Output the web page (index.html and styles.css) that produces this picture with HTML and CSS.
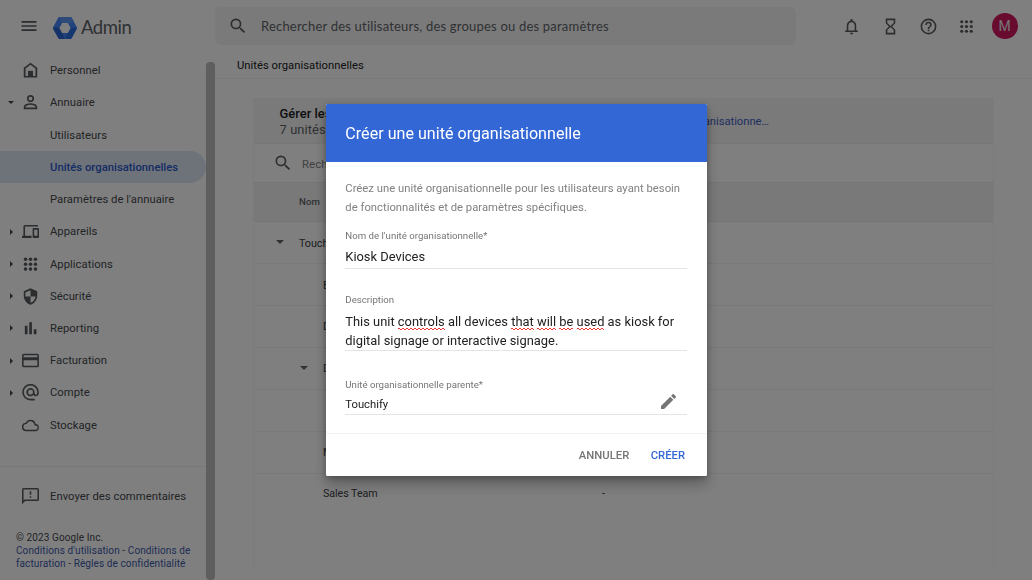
FILE: index.html
```html
<!DOCTYPE html>
<html lang="fr">
<head>
<meta charset="utf-8">
<title>Admin - Unités organisationnelles</title>
<link rel="stylesheet" href="styles.css">
</head>
<body>
<div class="app">
  <header class="topbar">
    <svg class="menu-icon" viewBox="0 0 24 24"><path d="M3 18h18v-2H3v2zm0-5h18v-2H3v2zm0-7v2h18V6H3z"/></svg>
    <svg class="logo" viewBox="0 0 24 22">
      <path fill="#4285f4" d="M6.800 0h10.400q1 0 1.500.8l4.900 8.900q.6 1.200 0 2.400l-4.900 8.900q-.5 1-1.500 1H6.800q-1 0-1.500-1L.4 12.200q-.6-1.200 0-2.400L5.300.8Q5.800 0 6.800 0z"/>
      <path fill="#2a66d0" d="M.2 10L7.500 11l4 11H6.800q-1 0-1.500-1L.4 12.200Q0 11 .2 10z"/>
      <path fill="#5c94f2" d="M6.800 0h10.400q1 0 1.500.8L21 5l-5 2-8-1z"/>
      <path fill="#2b6cdc" d="M23.800 10.500L17 11l-5 11h5.200q1 0 1.500-1l4.900-8.900q.4-.8.200-1.600z"/>
      <path fill="#fff" d="M9.200 6.100h5.600l2.800 4.900-2.800 4.900H9.200L6.400 11z"/>
    </svg>
    <span class="brand">Admin</span>
    <div class="search">
      <svg viewBox="0 0 24 24"><path d="M15.500 14h-.79l-.28-.27A6.470 6.470 0 0 0 16 9.500 6.500 6.500 0 1 0 9.500 16c1.610 0 3.090-.59 4.230-1.570l.27.28v.79l5 4.990L20.490 19l-4.990-5zm-6 0a4.500 4.500 0 1 1 0-9 4.500 4.500 0 0 1 0 9z"/></svg>
      <span>Rechercher des utilisateurs, des groupes ou des paramètres</span>
    </div>
    <div class="tools">
      <svg viewBox="0 0 24 24"><path d="M18 17v-6c0-3.070-1.630-5.640-4.500-6.320V4a1.500 1.500 0 0 0-3 0v.68C7.640 5.360 6 7.920 6 11v6H4v2h16v-2h-2zm-2 0H8v-6c0-2.480 1.510-4.500 4-4.500s4 2.020 4 4.500v6zm-4 5a2 2 0 0 0 2-2h-4c0 1.100.9 2 2 2z"/></svg>
      <svg viewBox="0 0 24 24"><path d="M6 2v6l4 4-4 4v6h12v-6l-4-4 4-4V2H6zm10 14.500V20H8v-3.500l4-4 4 4zm-4-5l-4-4V4h8v3.500l-4 4z"/></svg>
      <svg viewBox="0 0 24 24"><path d="M11 18h2v-2h-2v2zm1-16a10 10 0 1 0 0 20 10 10 0 0 0 0-20zm0 18a8 8 0 1 1 0-16 8 8 0 0 1 0 16zm0-14a4 4 0 0 0-4 4h2c0-1.100.9-2 2-2s2 .9 2 2c0 2-3 1.750-3 5h2c0-2.250 3-2.500 3-5a4 4 0 0 0-4-4z"/></svg>
      <svg viewBox="0 0 24 24"><circle cx="6" cy="6" r="2"/><circle cx="12" cy="6" r="2"/><circle cx="18" cy="6" r="2"/><circle cx="6" cy="12" r="2"/><circle cx="12" cy="12" r="2"/><circle cx="18" cy="12" r="2"/><circle cx="6" cy="18" r="2"/><circle cx="12" cy="18" r="2"/><circle cx="18" cy="18" r="2"/></svg>
      <span class="avatar">M</span>
    </div>
  </header>

  <div class="body">
    <aside class="sidebar">
      <nav class="nav">
        <a class="item"><i></i><svg viewBox="0 0 24 24"><path d="M12 1L2.500 8v14h19V8L12 1zm7 18.700H5V9.200l7-5.200 7 5.200v10.500z"/><path d="M8.500 12.500h7V20h-7z"/></svg>Personnel</a>
        <a class="item"><i class="down"></i><svg viewBox="0 0 24 24"><path d="M12 3.800a2.700 2.700 0 1 1 0 5.400 2.700 2.700 0 0 1 0-5.400m0-2.300a5 5 0 1 0 0 10 5 5 0 0 0 0-10zm0 11.500c-3.500 0-9.500 1.500-9.500 5V21.500h19V18c0-3.500-6-5-9.500-5zm7 6.200H5V18c0-1 3.500-2.700 7-2.700s7 1.700 7 2.700v1.200z"/></svg>Annuaire</a>
        <a class="item sub">Utilisateurs</a>
        <a class="item sub active">Unités organisationnelles</a>
        <a class="item sub">Paramètres de l'annuaire</a>
        <a class="item"><i class="right"></i><svg viewBox="0 0 24 24"><path d="M4.300 5H22.500V2.700H4.300A2.300 2.300 0 0 0 2 5v13H0v3h13.500v-3H4.300V5zM22.800 7.200h-6.600a1.200 1.200 0 0 0-1.200 1.200v11.400A1.200 1.200 0 0 0 16.200 21h6.600a1.200 1.200 0 0 0 1.200-1.200V8.400a1.200 1.200 0 0 0-1.200-1.200zM21.800 18h-4.600V9.500h4.600V18z"/></svg>Appareils</a>
        <a class="item"><i class="right"></i><svg viewBox="0 0 24 24"><circle cx="5" cy="4.500" r="2.500"/><circle cx="12" cy="4.500" r="2.500"/><circle cx="19" cy="4.500" r="2.500"/><circle cx="5" cy="11.500" r="2.500"/><circle cx="12" cy="11.500" r="2.500"/><circle cx="19" cy="11.500" r="2.500"/><circle cx="5" cy="18.500" r="2.500"/><circle cx="12" cy="18.500" r="2.500"/><circle cx="19" cy="18.500" r="2.500"/></svg>Applications</a>
        <a class="item"><i class="right"></i><svg viewBox="0 0 24 24"><path d="M12 .5L2.500 4.700V11c0 5.800 4 11.200 9.500 12.500 5.500-1.300 9.500-6.700 9.500-12.500V4.700L12 .5zm0 11.500h7.200c-.53 4.120-3.480 7.790-7.200 8.940V12H4.800V6.200L12 3.100V12z"/></svg>Sécurité</a>
        <a class="item"><i class="right"></i><svg viewBox="0 0 24 24"><path d="M4 8h3.800v12H4zM10.200 3H14v17h-3.800zM16.600 13h3.800v7h-3.800z"/></svg>Reporting</a>
        <a class="item"><i class="right"></i><svg viewBox="0 0 24 24"><path d="M21.700 2.500H2.300A2.200 2.200 0 0 0 .1 4.700v14.600a2.200 2.200 0 0 0 2.200 2.200h19.400a2.200 2.200 0 0 0 2.200-2.200V4.700a2.200 2.200 0 0 0-2.200-2.200zm0 16.800H2.300V11.500h19.400v7.800zm0-12H2.300V4.700h19.400v2.600z"/></svg>Facturation</a>
        <a class="item"><i class="right"></i><svg viewBox="0 0 24 24"><path transform="translate(-2 -2.500) scale(1.170)" d="M12 2a10 10 0 0 0 0 20h5v-2h-5c-4.340 0-8-3.660-8-8s3.660-8 8-8 8 3.660 8 8v1.430c0 .79-.71 1.570-1.500 1.570s-1.500-.78-1.500-1.570V12a5 5 0 1 0-1.460 3.540c.65.890 1.770 1.460 2.960 1.460 1.970 0 3.500-1.600 3.500-3.570V12A10 10 0 0 0 12 2zm0 13a3 3 0 1 1 0-6 3 3 0 0 1 0 6z"/></svg>Compte</a>
        <a class="item"><i></i><svg viewBox="0 0 24 24"><path d="M19.350 10.040A7.490 7.490 0 0 0 12 4C9.110 4 6.600 5.640 5.350 8.040A5.990 5.990 0 0 0 6 20h13a5 5 0 0 0 .35-9.960zM19 18H6a4 4 0 0 1-.42-7.980l1.070-.11.500-.95A5.470 5.470 0 0 1 12 6c2.620 0 4.880 1.860 5.390 4.430l.3 1.500 1.530.11A2.980 2.980 0 0 1 19 18z"/></svg>Stockage</a>
      </nav>
      <a class="item feedback"><i></i><svg viewBox="0 0 24 24"><path d="M21.800 0H2.200A2.200 2.200 0 0 0 0 2.200V23l4.600-4.600h17.200a2.200 2.200 0 0 0 2.200-2.200v-14A2.200 2.200 0 0 0 21.800 0zm0 16.200H3.700l-1.500 1.500V2.200h19.600v14z"/><path d="M10.900 4.500h2.200v5.200h-2.200zM10.900 11.700h2.200v2.200h-2.200z"/></svg>Envoyer des commentaires</a>
      <footer class="legal">© 2023 Google Inc.<br><a>Conditions d'utilisation</a> - <a>Conditions de<br>facturation</a> - <a>Règles de confidentialité</a></footer>
    </aside>
    <div class="scrollbar"></div>
    <main class="main">
      <div class="crumb">Unités organisationnelles</div>
      <section class="card">
        <div class="card-head">
          <div><div class="card-title">Gérer les</div><div class="card-count">7 unités</div></div>
          <a class="card-link">organisationne…</a>
        </div>
        <div class="card-search">
          <svg viewBox="0 0 24 24"><path d="M15.500 14h-.79l-.28-.27A6.470 6.470 0 0 0 16 9.500 6.500 6.500 0 1 0 9.500 16c1.610 0 3.090-.59 4.230-1.570l.27.28v.79l5 4.990L20.490 19l-4.990-5zm-6 0a4.500 4.500 0 1 1 0-9 4.500 4.500 0 0 1 0 9z"/></svg>
          <span>Rech</span>
        </div>
        <div class="card-cols">Nom</div>
        <div class="row root"><i class="down big"></i>Touch</div>
        <div class="row">E</div>
        <div class="row">D</div>
        <div class="row parent"><i class="down big"></i>D</div>
        <div class="row"></div>
        <div class="row">M</div>
        <div class="row last"><span class="name">Sales Team</span><span>-</span></div>
      </section>
    </main>
  </div>
</div>

<div class="scrim">
  <div class="dialog" role="dialog">
    <h1 class="dialog-title">Créer une unité organisationnelle</h1>
    <div class="dialog-body">
      <p class="intro">Créez une unité organisationnelle pour les utilisateurs ayant besoin<br>de fonctionnalités et de paramètres spécifiques.</p>
      <div class="field name-field"><label>Nom de l'unité organisationnelle*</label><div class="value">Kiosk Devices</div></div>
      <div class="field desc-field"><label>Description</label><div class="value">This unit <u>controls</u> all devices <u>that</u> <u>will</u> <u>be</u> <u>used</u> as kiosk for<br>digital signage or interactive signage.</div></div>
      <div class="field parent-field"><label>Unité organisationnelle parente*</label><div class="value small">Touchify</div>
        <svg class="pencil" viewBox="0 0 18 18"><path d="M0 14.250V18h3.750L14.810 6.940l-3.750-3.750L0 14.250zM17.710 4.040a1 1 0 0 0 0-1.410L15.370.29a1 1 0 0 0-1.410 0l-1.830 1.830 3.750 3.750 1.830-1.830z"/></svg>
      </div>
    </div>
    <div class="actions"><button class="btn">ANNULER</button><button class="btn primary">CRÉER</button></div>
  </div>
</div>
</body>
</html>
```

FILE: styles.css
```css
* { box-sizing: border-box; }
body { margin: 0; width: 1032px; height: 580px; overflow: hidden; background: #fff; font-family: Roboto, "Liberation Sans", sans-serif; font-size: 11.27px; color: #45484b; }
svg { display: block; flex: none; fill: #575a5e; }
i { flex: none; display: block; }
.app { height: 580px; display: flex; flex-direction: column; }

.topbar { height: 52px; flex: none; display: flex; align-items: center; padding-left: 19px; }
.menu-icon { width: 20px; height: 20px; }
.logo { width: 24px; height: 22px; margin: 3px 4px 0 14px; }
.brand { width: 134px; font-family: Lato, sans-serif; font-size: 18.5px; color: #5f6368; letter-spacing: -.45px; padding-top: 2px; }
.search { width: 581px; height: 38px; background: #f4f4f5; border-radius: 6px; display: flex; align-items: center; padding-left: 13px; font-family: Lato, sans-serif; font-size: 13px; letter-spacing: .2px; color: #5f6368; }
.search svg { width: 20px; height: 20px; margin-right: 13px; }
.tools { display: flex; align-items: center; margin-left: 46px; }
.tools svg { width: 19px; height: 19px; margin-right: 19.5px; }
.tools svg:nth-child(4) { margin-right: 16px; margin-left: -1px; }
.avatar { width: 26px; height: 26px; border-radius: 50%; background: #d0165f; color: #e8e8e8; font-size: 14px; font-weight: 400; display: grid; place-items: center; }

.body { flex: 1; display: flex; min-height: 0; }
.sidebar { width: 206px; flex: none; }
.nav { padding-top: 2.6px; height: 415px; border-bottom: 1px solid #efeff0; }
.item { height: 32.23px; display: flex; align-items: center; letter-spacing: .03px; }
.item svg { width: 17px; height: 17px; margin-right: 10.8px; }
.item i { width: 22.2px; }
.down::before, .right::before { content: ""; display: block; width: 0; height: 0; border: 3.5px solid transparent; }
.down::before { margin: 3px 0 0 7.5px; border-top-color: #45484b; }
.right::before { margin-left: 9.5px; border-left-color: #45484b; }
.sub { padding-left: 50px; }
.active { background: #dde6f5; color: #2b59c8; font-weight: 500; border-radius: 0 16px 16px 0; letter-spacing: .01px; }
.feedback { margin-top: 13.5px; }
.legal { padding: 19.5px 0 0 16px; font-size: 10px; line-height: 12.9px; letter-spacing: .1px; white-space: nowrap; }
.legal a { color: #3c5aa8; }
.scrollbar { width: 9px; flex: none; margin-top: 10px; background: #bcbcbc; border-radius: 4px; }

.main { flex: 1; min-width: 0; }
.crumb { height: 27px; border-bottom: 1px solid #f4f4f4; padding: 7px 0 0 22px; line-height: 13px; color: #202124; letter-spacing: .01px; }
.card { margin: 19px 0 0 38px; width: 741px; height: 468px; border: 1px solid #f6f6f6; border-width: 0 1px; }
.card-head { height: 45.5px; background: #f4f4f4; border-bottom: 1px solid #eee; display: flex; padding-left: 25.5px; justify-content: space-between; }
.card-title { font-size: 12.9px; line-height: 16px; margin-top: 7.5px; color: #202124; font-weight: 500; letter-spacing: .03px; }
.card-count { font-size: 12.9px; line-height: 15.5px; color: #5f6368; letter-spacing: .1px; }
.card-link { margin: 17px 224px 0 0; line-height: 13px; letter-spacing: -.05px; color: #3f5fc0; }
.card-search { height: 38px; display: flex; align-items: center; padding-left: 19px; letter-spacing: .15px; color: #808387; }
.card-search svg { width: 20px; height: 20px; margin-right: 9px; }
.card-search span { padding-top: 3px; }
.card-cols { height: 40.5px; background: #f3f3f3; border: solid #ebebeb; border-width: 1px 0; display: flex; align-items: center; padding-left: 45px; font-size: 9.66px; font-weight: 500; letter-spacing: .1px; color: #5f6368; }
.row { height: 41.95px; border-bottom: 1px solid #f3f3f3; display: flex; align-items: center; padding: 1.2px 0 0 69px; font-size: 10.7px; color: #3c4043; }
.root { padding-left: 19px; }
.root .big { width: 26px; }
.parent { padding-left: 43px; }
.parent .big { width: 26px; }
.big::before { margin: 2px 0 0 3px; border-width: 4.5px; border-top-color: #5f6368; }
.last { border-bottom: 0; padding-top: 0; height: 40.6px; }
.last .name { width: 279px; letter-spacing: -.05px; }

.scrim { position: fixed; inset: 0; background: rgba(0, 0, 0, .5); padding: 104.4px 0 0 326px; }
.dialog { width: 380.5px; height: 371.6px; background: #fff; border-radius: 1.5px; box-shadow: 0 9px 14px rgba(0, 0, 0, .24), 0 2px 6px rgba(0, 0, 0, .25); overflow: hidden; display: flex; flex-direction: column; }
.dialog-title { margin: 0; height: 58px; flex: none; background: #3367d6; color: #fff; font-size: 16.1px; font-weight: 400; display: flex; align-items: center; padding-left: 19.3px; letter-spacing: .01px; }
.dialog-body { height: 271.5px; border-bottom: 1px solid #f3f3f3; padding: 16.4px 19.5px 0 19.3px; }
.intro { margin: 0; line-height: 19.3px; letter-spacing: .01px; color: #808080; white-space: nowrap; }
.field { position: relative; border-bottom: 1px solid #e4e4e4; white-space: nowrap; }
.field label { display: block; font-size: 9.66px; line-height: 12px; color: #757575; }
.value { font-size: 12.9px; line-height: 19.3px; color: #212121; }
.name-field { margin-top: 12.6px; height: 39px; }
.name-field .value { margin-top: 5.2px; }
.desc-field { margin-top: 25px; height: 57.3px; }
.desc-field .value { margin-top: 5.7px; }
/* spell-check squiggle: a short zigzag tile along the bottom edge */
.desc-field u { text-decoration: none; padding-bottom: 1px; background: linear-gradient(45deg, transparent 36%, #e53935 36% 64%, transparent 64%) 0 100% / 4px 2px repeat-x, linear-gradient(-45deg, transparent 36%, #e53935 36% 64%, transparent 64%) 2px 100% / 4px 2px repeat-x; }
.parent-field { margin-top: 27.8px; height: 35.6px; }
.small { font-size: 11.27px; line-height: 14px; margin-top: 6.5px; }
.pencil { position: absolute; right: 11.2px; top: 14.5px; width: 15px; height: 15px; fill: #757575; }
.actions { flex: 1; display: flex; align-items: center; justify-content: flex-end; gap: 21.5px; padding: 1px 21.5px 0 0; }
.btn { border: 0; padding: 0; background: none; font: 500 11.27px Roboto, sans-serif; color: #757575; }
.primary { color: #3367d6; }
```
